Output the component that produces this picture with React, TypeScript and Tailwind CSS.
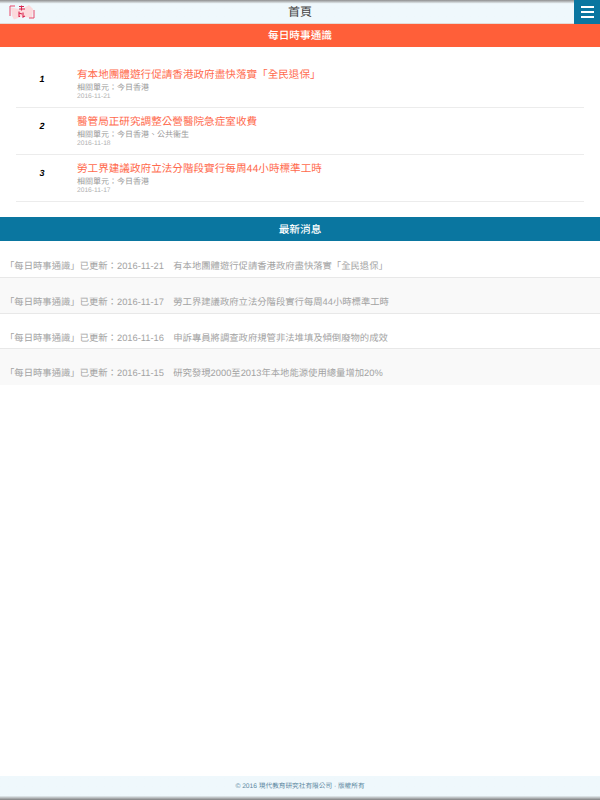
const cjk = "font-['Liberation_Sans','Noto_Sans_CJK_TC',sans-serif]";

const lessons = [
  { no: 1, title: "有本地團體遊行促請香港政府盡快落實「全民退保」", unit: "相關單元：今日香港", date: "2016-11-21" },
  { no: 2, title: "醫管局正研究調整公營醫院急症室收費", unit: "相關單元：今日香港、公共衞生", date: "2016-11-18" },
  { no: 3, title: "勞工界建議政府立法分階段實行每周44小時標準工時", unit: "相關單元：今日香港", date: "2016-11-17" },
];

const news = [
  { date: "2016-11-21", text: "有本地團體遊行促請香港政府盡快落實「全民退保」" },
  { date: "2016-11-17", text: "勞工界建議政府立法分階段實行每周44小時標準工時" },
  { date: "2016-11-16", text: "申訴專員將調查政府規管非法堆填及傾倒廢物的成效" },
  { date: "2016-11-15", text: "研究發現2000至2013年本地能源使用總量增加20%" },
];

function Logo() {
  return (
    <svg width="26" height="16" viewBox="0 0 26 16" className="ml-[9px]">
      {/* open book pages */}
      <path d="M2 3.500L12.500 5.500L20 1L24 5L23 14L13 12.500L5 15.500L3 12Z" fill="#fcd9dc" />
      <path d="M1 12V2h5M25 6v8h-5" fill="none" stroke="#e8486a" strokeWidth="1" />
      <path d="M10 2.500h5M10 5h6M12.500 1.500v5M10 9l3 1M10 7.500v5h1M14 8.500v4.500l2-1" fill="none" stroke="#d9264f" strokeWidth="1.100" />
    </svg>
  );
}

export default function App() {
  return (
    <div className={`${cjk} [text-rendering:geometricPrecision] antialiased w-[600px] h-[800px] bg-white flex flex-col`}>
      <header className="h-6 flex items-center justify-between relative bg-[#eff8fc] bg-gradient-to-b from-[#8f8f8f] via-[#eff8fc] via-[16%] to-[#eff8fc] border-b border-[#e3dcd8]">
        <Logo />
        <span className="absolute left-0 right-0 top-0 text-center text-[12px] leading-[25px] text-[#444]">首頁</span>
        <div className="w-[26px] h-6 bg-[#0a76a0] flex flex-col items-center justify-center gap-[3px] relative">
          <span className="w-[13px] h-[2px] bg-white" />
          <span className="w-[13px] h-[2px] bg-white" />
          <span className="w-[13px] h-[2px] bg-white" />
        </div>
      </header>

      <div className="h-[23px] pt-px bg-[#ff5f39] text-white text-[10.67px] font-medium flex items-center justify-center">每日時事通識</div>

      <ul className="mt-[14px] mx-4">
        {lessons.map((l) => (
          <li key={l.no} className="h-[47px] border-b border-[#ececec] flex">
            <span className="w-[52px] pt-[11px] text-center text-[9px] leading-[14px] font-bold italic text-black shrink-0">{l.no}</span>
            <div className="pl-[9px] pt-[7.5px]">
              <div className="text-[10.6px] leading-[13px] text-[#ff6a4d]">{l.title}</div>
              <div className="text-[8px] leading-[11px] text-[#999]">{l.unit}</div>
              <div className="text-[6.67px] leading-[8px] text-[#b0b0b0]">{l.date}</div>
            </div>
          </li>
        ))}
      </ul>

      <div className="mt-[15px] h-6 pt-px bg-[#0a76a0] text-white text-[10.67px] font-medium flex items-center justify-center">最新消息</div>

      <ul className="mt-[1.33px]">
        {news.map((n, i) => (
          <li
            key={n.date}
            className={`h-[35.67px] pl-[5px] pt-[17px] text-[9.33px] leading-[14px] whitespace-pre text-[#a3a3a3] ${i % 2 ? "bg-[#f9f9f9]" : "bg-white"} ${i < 3 ? "border-b border-[#e8e8e8]" : ""}`}
          >
            {`「每日時事通識」已更新：${n.date}　${n.text}`}
          </li>
        ))}
      </ul>

      <footer className="mt-auto h-6 pb-[2px] flex items-center justify-center bg-[#eff8fc] bg-gradient-to-t from-[#808080] via-[#eff8fc] via-[18%] to-[#eff8fc] text-[6.67px] text-[#5b87a0]">
        © 2016 現代教育研究社有限公司 · 版權所有
      </footer>
    </div>
  );
}
